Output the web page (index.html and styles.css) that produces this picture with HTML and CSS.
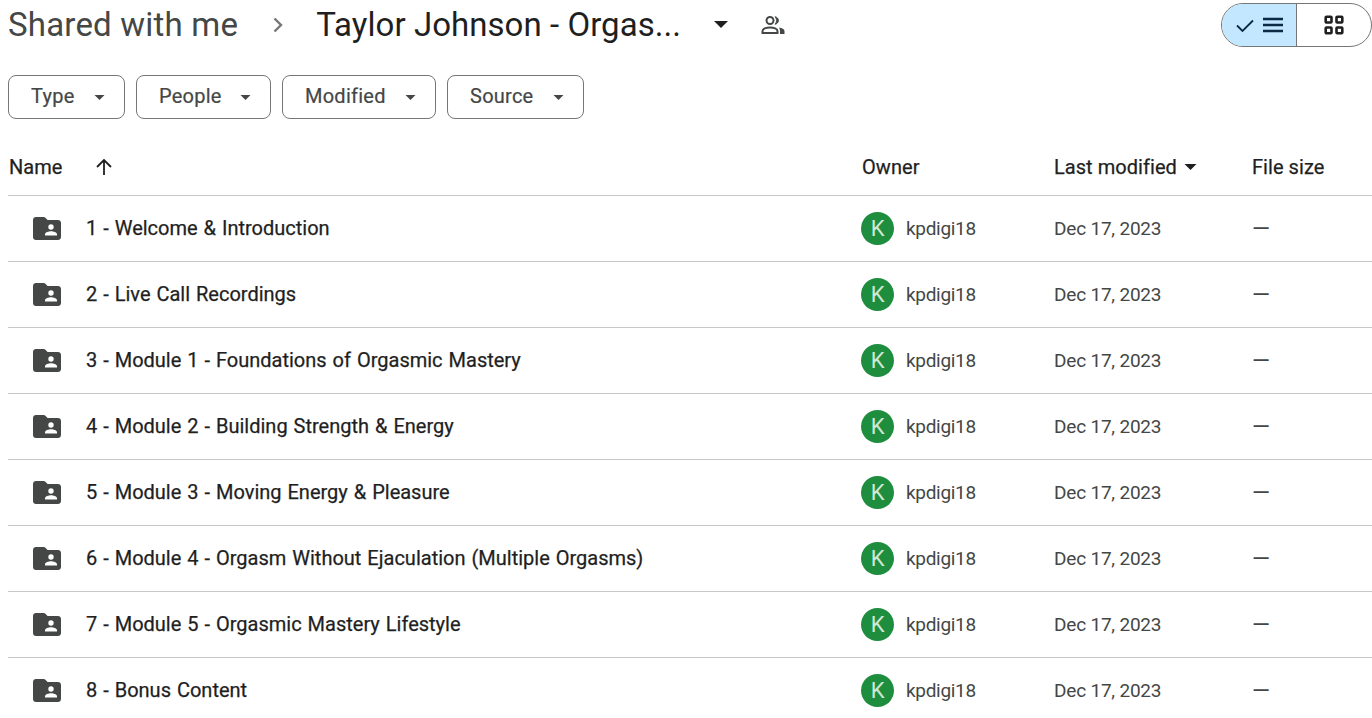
FILE: index.html
```html
<!DOCTYPE html>
<html lang="en">
<head>
<meta charset="utf-8">
<title>Taylor Johnson - Shared with me</title>
<link rel="stylesheet" href="styles.css">
</head>
<body>
<svg class="sprites" width="0" height="0" aria-hidden="true">
  <symbol id="folder" viewBox="0 0 28 23">
    <path fill="#444746" d="M3 0h7.600c.7 0 1.300.3 1.800.8L14.600 3H25c1.600 0 3 1.300 3 3v14c0 1.700-1.400 3-3 3H3c-1.700 0-3-1.300-3-3V3c0-1.700 1.300-3 3-3z"/>
    <circle fill="#fff" cx="18" cy="10" r="2.700"/>
    <path fill="#fff" d="M12 18.500v-1.300c0-1.800 3.600-2.900 6-2.900s6 1.100 6 2.900v1.300z"/>
  </symbol>
  <symbol id="caret" viewBox="0 0 10 5"><path d="M0 0h10L5 5z"/></symbol>
</svg>
<header class="topbar">
  <nav class="crumbs">
    <span class="crumb-root">Shared with me</span>
    <svg class="chev" width="12" height="18" viewBox="0 0 12 18"><path d="M2.500 2.500L9 9l-6.500 6.500" fill="none" stroke="#747775" stroke-width="2.400"/></svg>
    <span class="crumb-current">Taylor Johnson - Orgas...</span>
    <svg class="crumb-caret" width="14" height="7"><use href="#caret"/></svg>
    <svg class="people" width="24" height="20" viewBox="0 0 24 20" fill="none" stroke="#444746" stroke-width="2">
      <circle cx="9" cy="5.500" r="3.500"/>
      <path d="M1.500 18v-1.800c0-2.400 3.800-3.700 7.500-3.700s7.500 1.300 7.500 3.700V18z"/>
      <path d="M14 1.800c2 .3 3.400 1.800 3.400 3.700s-1.400 3.400-3.400 3.700c1-1 1.500-2.300 1.500-3.700s-.5-2.700-1.500-3.700z" fill="#444746" stroke-width="1"/>
      <path d="M18 12.600c3 .5 5.500 1.600 5.500 3.600V19h-4.500v-2.800c0-1.300-.3-2.500-1-3.600z" fill="#444746" stroke="none"/>
    </svg>
  </nav>
  <div class="view-toggle">
    <div class="view-btn view-on">
      <svg width="20" height="16" viewBox="0 0 20 16"><path d="M2 8.500l5.500 5.500L18 3.500" fill="none" stroke="#0b2b45" stroke-width="1.800"/></svg>
      <svg width="20" height="16" viewBox="0 0 20 16"><path d="M0 2h20M0 8h20M0 14h20" stroke="#0b2b45" stroke-width="2.400"/></svg>
    </div>
    <div class="view-btn">
      <svg width="20" height="20" viewBox="0 0 20 20" fill="none" stroke="#1f1f1f" stroke-width="2.600">
        <rect x="1.700" y="1.700" width="5.800" height="5.800" rx=".8"/><rect x="12.500" y="1.700" width="5.800" height="5.800" rx=".8"/>
        <rect x="1.700" y="12.500" width="5.800" height="5.800" rx=".8"/><rect x="12.500" y="12.500" width="5.800" height="5.800" rx=".8"/>
      </svg>
    </div>
  </div>
</header>

<div class="filters">
  <button class="chip chip-type">Type<svg width="11" height="5"><use href="#caret"/></svg></button>
  <button class="chip chip-people">People<svg width="11" height="5"><use href="#caret"/></svg></button>
  <button class="chip chip-modified">Modified<svg width="11" height="5"><use href="#caret"/></svg></button>
  <button class="chip chip-source">Source<svg width="11" height="5"><use href="#caret"/></svg></button>
</div>

<main class="table">
  <div class="row head">
    <div class="head-name">Name
      <svg width="18" height="18" viewBox="0 0 18 18"><path d="M9 17V2M2 9l7-7 7 7" fill="none" stroke="#1f1f1f" stroke-width="1.800"/></svg>
    </div>
    <div>Owner</div>
    <div class="head-mod">Last modified<svg width="13" height="6"><use href="#caret"/></svg></div>
    <div>File size</div>
  </div>

  <div class="row item"><div class="name"><svg class="folder" width="28" height="23"><use href="#folder"/></svg><span class="label">1 - Welcome &amp; Introduction</span></div><div class="owner"><span class="avatar">K</span><span class="label">kpdigi18</span></div><div class="cell">Dec 17, 2023</div><div class="cell dash">—</div></div>
  <div class="row item"><div class="name"><svg class="folder" width="28" height="23"><use href="#folder"/></svg><span class="label">2 - Live Call Recordings</span></div><div class="owner"><span class="avatar">K</span><span class="label">kpdigi18</span></div><div class="cell">Dec 17, 2023</div><div class="cell dash">—</div></div>
  <div class="row item"><div class="name"><svg class="folder" width="28" height="23"><use href="#folder"/></svg><span class="label">3 - Module 1 - Foundations of Orgasmic Mastery</span></div><div class="owner"><span class="avatar">K</span><span class="label">kpdigi18</span></div><div class="cell">Dec 17, 2023</div><div class="cell dash">—</div></div>
  <div class="row item"><div class="name"><svg class="folder" width="28" height="23"><use href="#folder"/></svg><span class="label">4 - Module 2 - Building Strength &amp; Energy</span></div><div class="owner"><span class="avatar">K</span><span class="label">kpdigi18</span></div><div class="cell">Dec 17, 2023</div><div class="cell dash">—</div></div>
  <div class="row item"><div class="name"><svg class="folder" width="28" height="23"><use href="#folder"/></svg><span class="label">5 - Module 3 - Moving Energy &amp; Pleasure</span></div><div class="owner"><span class="avatar">K</span><span class="label">kpdigi18</span></div><div class="cell">Dec 17, 2023</div><div class="cell dash">—</div></div>
  <div class="row item"><div class="name"><svg class="folder" width="28" height="23"><use href="#folder"/></svg><span class="label">6 - Module 4 - Orgasm Without Ejaculation (Multiple Orgasms)</span></div><div class="owner"><span class="avatar">K</span><span class="label">kpdigi18</span></div><div class="cell">Dec 17, 2023</div><div class="cell dash">—</div></div>
  <div class="row item"><div class="name"><svg class="folder" width="28" height="23"><use href="#folder"/></svg><span class="label">7 - Module 5 - Orgasmic Mastery Lifestyle</span></div><div class="owner"><span class="avatar">K</span><span class="label">kpdigi18</span></div><div class="cell">Dec 17, 2023</div><div class="cell dash">—</div></div>
  <div class="row item"><div class="name"><svg class="folder" width="28" height="23"><use href="#folder"/></svg><span class="label">8 - Bonus Content</span></div><div class="owner"><span class="avatar">K</span><span class="label">kpdigi18</span></div><div class="cell">Dec 17, 2023</div><div class="cell dash">—</div></div>
</main>
</body>
</html>
```

FILE: styles.css
```css
* { box-sizing: border-box; }
html, body { height: 100%; }
body {
  margin: 0;
  height: 718px;
  overflow: hidden;
  background: #fff;
  color: #1f1f1f;
  font-family: Roboto, "Liberation Sans", sans-serif;
}
.sprites { position: absolute; }

.topbar {
  display: flex;
  justify-content: space-between;
  align-items: center;
  height: 47px;
  margin-top: 3px;
  padding-left: 8px;
}
.crumbs { display: flex; align-items: center; margin-top: -4px; }
.crumb-root { font-size: 33px; letter-spacing: .2px; color: #444746; white-space: nowrap; }
.chev { margin-left: 34px; }
.crumb-current { margin-left: 32px; font-size: 33px; letter-spacing: .05px; color: #1f1f1f; white-space: nowrap; }
.crumb-caret { margin-left: 33px; fill: #1f1f1f; }
.people { margin-left: 33px; }

.view-toggle {
  display: flex;
  width: 151px;
  height: 44px;
  margin-bottom: 3px;
  border: 1px solid #747775;
  border-radius: 22px;
  overflow: hidden;
}
.view-btn {
  flex: 1;
  display: flex;
  align-items: center;
  justify-content: center;
  gap: 8px;
}
.view-on { background: #c2e7ff; border-right: 1px solid #747775; flex: 0 0 75px; }

.filters { display: flex; gap: 11px; padding: 25px 0 0 8px; }
.chip {
  display: flex;
  align-items: center;
  justify-content: space-between;
  height: 44px;
  padding: 0 19px 2px 22px;
  border: 1px solid #747775;
  border-radius: 8px;
  background: #fff;
  color: #444746;
  font: 400 20px Roboto, sans-serif;
  letter-spacing: .25px;
  -webkit-text-stroke: .2px #444746;
  fill: #444746;
}
.chip svg { margin-top: 3px; }
.chip-type { width: 117px; }
.chip-people { width: 135px; }
.chip-modified { width: 154px; }
.chip-source { width: 137px; }

.table { margin: 0 0 0 8px; }
.row {
  display: grid;
  grid-template-columns: 854px 192px 198px 1fr;
  align-items: center;
  border-bottom: 1px solid #c7c7c7;
}
.head { height: 77px; padding-top: 20px; font-size: 20px; color: #1f1f1f; letter-spacing: .05px; -webkit-text-stroke: .25px #1f1f1f; }
.head-name { display: flex; align-items: center; gap: 32px; padding-left: 1px; }
.head-mod { display: flex; align-items: center; gap: 7px; fill: #1f1f1f; }
.item { height: 66px; font-size: 19px; }
.name { display: flex; align-items: center; font-size: 20px; white-space: nowrap; word-spacing: 1px; -webkit-text-stroke: .25px #1f1f1f; }
.folder { margin: 0 25px 0 25px; flex: none; }
.label { margin-top: -2px; }
.owner { display: flex; align-items: center; gap: 12px; color: #444746; letter-spacing: -.3px; }
.avatar {
  margin-left: -1px;
  width: 33px;
  height: 33px;
  border-radius: 50%;
  background: #1e8e3e;
  color: #cfe8d6;
  display: flex;
  align-items: center;
  justify-content: center;
  font-size: 22px;
}
.owner .label { margin-top: -1px; }
.cell { color: #444746; padding-bottom: 1px; letter-spacing: -.2px; }
.dash { font-size: 23px; padding: 1px 0 0; }
```
